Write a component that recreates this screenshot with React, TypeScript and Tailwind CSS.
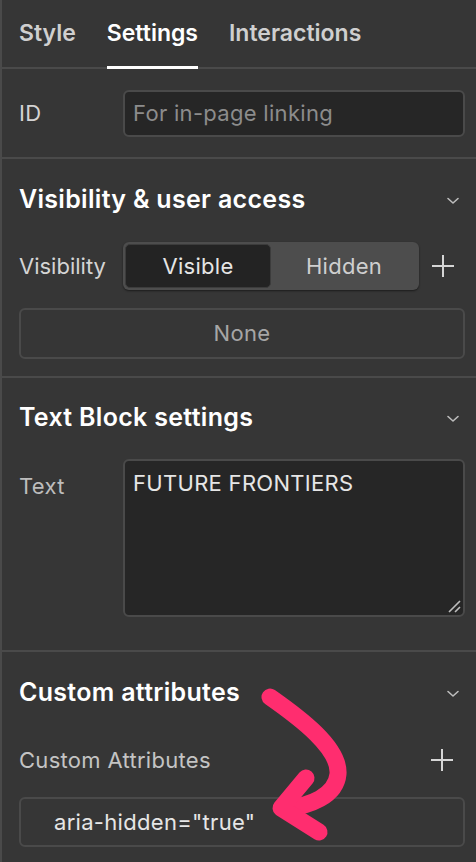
import React from 'react';

const Chevron = () => (
  <svg width="14" height="10" viewBox="0 0 14 10" fill="none" className="text-[#bdbdbd]">
    <path d="M2 2.5 L7 7 L12 2.5" stroke="currentColor" strokeWidth="1.6" strokeLinecap="round" strokeLinejoin="round" />
  </svg>
);

const Plus = () => (
  <svg width="24" height="24" viewBox="0 0 24 24" fill="none" className="text-[#d6d6d6]">
    <path d="M12 1 V23 M1 12 H23" stroke="currentColor" strokeWidth="2" />
  </svg>
);

const SectionHeading = ({ title }: { title: string }) => (
  <div className="flex items-center justify-between h-[44px]">
    <h2 className="text-[25px] font-semibold text-white tracking-[0.3px]">{title}</h2>
    <div className="pr-[5px] pt-[2px]">
      <Chevron />
    </div>
  </div>
);

export default function App() {
  return (
    <div
      className="w-[476px] h-[862px] overflow-hidden bg-[#363636] border-l-2 border-[#4a4a4a] text-[#d4d4d4] relative tracking-[0.3px]"
      style={{ fontFamily: 'Inter, "Noto Sans", sans-serif' }}
    >
      {/* tabs */}
      <div className="flex items-end h-[69px] border-b-2 border-[#4a4a4a] pl-[17px] gap-[31px] tracking-normal">
        <div className="h-full flex items-center text-[23px] font-semibold text-[#cfcfcf]">Style</div>
        <div className="h-full flex items-center text-[23px] font-semibold text-white relative">
          Settings
          <div className="absolute left-0 right-0 -bottom-[2px] h-[3px] bg-white" />
        </div>
        <div className="h-full flex items-center text-[23px] font-semibold text-[#cfcfcf]">Interactions</div>
      </div>

      {/* ID */}
      <div className="flex items-center pl-[17px] pr-[11px] pt-[21px] pb-[20px] border-b-2 border-[#4a4a4a]">
        <div className="w-[104px] text-[22px] text-[#d4d4d4]">ID</div>
        <div className="flex-1 h-[47px] rounded-[6px] bg-[#262626] border-2 border-[#4a4a4a] flex items-center px-[8px] text-[22px] text-[#8c8c8c]">
          For in-page linking
        </div>
      </div>

      {/* Visibility */}
      <div className="pl-[17px] pr-[11px] pt-[19px] pb-[17px] border-b-2 border-[#4a4a4a]">
        <SectionHeading title="Visibility & user access" />
        <div className="flex items-center mt-[20px]">
          <div className="w-[104px] text-[22px] tracking-normal">Visibility</div>
          <div className="w-[296px] h-[48px] rounded-[6px] bg-[#4d4d4d] p-[2px] flex shadow-[0_1px_2px_rgba(0,0,0,0.5)]">
            <div className="w-[146px] h-full rounded-[5px] bg-[#232323] border border-[#3c3c3c] flex items-center justify-center text-[22px] text-[#e6e6e6]">
              Visible
            </div>
            <div className="flex-1 flex items-center justify-center text-[22px] text-[#cfcfcf]">Hidden</div>
          </div>
          <div className="flex-1 flex justify-center pl-[2px]">
            <Plus />
          </div>
        </div>
        <div className="mt-[18px] h-[51px] rounded-[6px] border-2 border-[#4a4a4a] flex items-center justify-center text-[22px] text-[#a6a6a6]">
          None
        </div>
      </div>

      {/* Text Block */}
      <div className="pl-[17px] pr-[11px] pt-[18px] pb-[33px] border-b-2 border-[#4a4a4a]">
        <SectionHeading title="Text Block settings" />
        <div className="flex mt-[19px]">
          <div className="w-[104px] text-[22px] text-[#bdbdbd] pt-[11px]">Text</div>
          <div className="flex-1 h-[158px] rounded-[6px] bg-[#262626] border-2 border-[#4a4a4a] px-[8px] pt-[6px] text-[22px] text-[#e6e6e6] relative">
            FUTURE FRONTIERS
            <svg width="14" height="14" viewBox="0 0 14 14" className="absolute right-[2px] bottom-[2px]">
              <path d="M2 13 L13 2 M8 13 L13 8" stroke="#bdbdbd" strokeWidth="1.6" />
            </svg>
          </div>
        </div>
      </div>

      {/* Custom attributes */}
      <div className="pl-[17px] pr-[11px] pt-[19px]">
        <SectionHeading title="Custom attributes" />
        <div className="flex items-center justify-between mt-[33px] h-[24px]">
          <div className="text-[22px] text-[#c4c4c4]">Custom Attributes</div>
          <div className="pr-[11px]">
            <Plus />
          </div>
        </div>
        <div className="mt-[25px] h-[50px] rounded-[6px] border-2 border-[#4a4a4a] flex items-center pl-[33px] text-[22px] text-[#e6e6e6]">
          aria-hidden="true"
        </div>
      </div>

      {/* annotation arrow */}
      <svg width="476" height="862" className="absolute left-[-2px] top-0 pointer-events-none">
        <path
          d="M270 697 C 300 718, 340 748, 338 774 C 336 796, 310 806, 284 809"
          stroke="#ff2d6f"
          strokeWidth="17"
          fill="none"
          strokeLinecap="round"
          strokeLinejoin="round"
        />
        <path
          d="M306 778 L 281 808 L 319 832"
          stroke="#ff2d6f"
          strokeWidth="17"
          fill="none"
          strokeLinecap="round"
          strokeLinejoin="round"
        />
      </svg>
    </div>
  );
}
